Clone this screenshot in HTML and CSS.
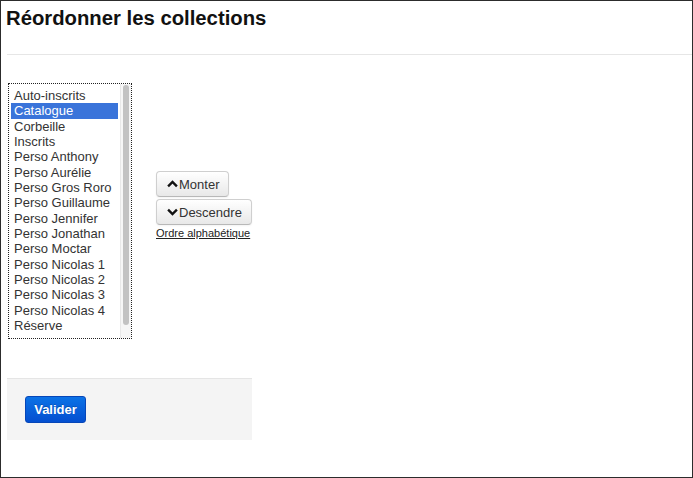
FILE: index.html
```html
<!DOCTYPE html>
<html lang="fr">
<head>
<meta charset="utf-8">
<title>Réordonner les collections</title>
<link rel="stylesheet" href="styles.css">
</head>
<body>
<div class="frame">
  <h1 class="title">Réordonner les collections</h1>
  <div class="rule"></div>
  <div class="editor">
    <div class="listbox">
      <ul class="options">
        <li>Auto-inscrits</li>
        <li class="selected">Catalogue</li>
        <li>Corbeille</li>
        <li>Inscrits</li>
        <li>Perso Anthony</li>
        <li>Perso Aurélie</li>
        <li>Perso Gros Roro</li>
        <li>Perso Guillaume</li>
        <li>Perso Jennifer</li>
        <li>Perso Jonathan</li>
        <li>Perso Moctar</li>
        <li>Perso Nicolas 1</li>
        <li>Perso Nicolas 2</li>
        <li>Perso Nicolas 3</li>
        <li>Perso Nicolas 4</li>
        <li>Réserve</li>
      </ul>
      <div class="scrollbar"><div class="thumb"></div></div>
    </div>
    <div class="controls">
      <button class="btn"><svg class="chev" viewBox="0 0 12 8" width="11" height="8"><path d="M1.2 6.6 6 1.8l4.8 4.8" fill="none" stroke="#111" stroke-width="2.6"/></svg>Monter</button>
      <button class="btn"><svg class="chev" viewBox="0 0 12 8" width="11" height="8"><path d="M1.2 1.4 6 6.2l4.8-4.8" fill="none" stroke="#111" stroke-width="2.6"/></svg>Descendre</button>
      <a class="alpha" href="#">Ordre alphabétique</a>
    </div>
  </div>
  <div class="actions">
    <button class="btn-primary">Valider</button>
  </div>
</div>
</body>
</html>
```
FILE: styles.css
```css
html, body { margin: 0; padding: 0; background: #fff; }
body { font-family: "Liberation Sans", Arial, Helvetica, sans-serif; color: #333; }
.frame {
  width: 693px; height: 478px; box-sizing: border-box;
  border: 1px solid #2c2c2c;
  padding: 0 0 0 6px;
  display: flex; flex-direction: column;
}
.title {
  margin: 5px 0 0 -1px;
  font-size: 20.3px; line-height: 24px; font-weight: bold; color: #111;
}
.rule { height: 1px; background: #e6e6e6; margin-top: 24px; }
.editor { display: flex; align-items: center; margin-top: 28px; margin-left: 1px; }
.listbox {
  width: 124px; height: 256px; box-sizing: border-box;
  border: 1px dotted #222;
  display: flex; position: relative;
}
.options {
  list-style: none; margin: 0 2px 0 0; padding: 4px 0 0 2px; flex: 1;
  font-size: 13px; line-height: 15.33px; color: #333;
}
.options li { padding-left: 3px; white-space: nowrap; }
.options li.selected { background: #3a74da; color: #fff; }
.scrollbar {
  width: 11px; background: #f6f6f6; border-left: 1px solid #e8e8e8;
  padding: 1px 2px 0 2px; box-sizing: border-box;
}
.thumb { height: 240px; background: #c2c2c2; border-radius: 4px; }
.controls { display: flex; flex-direction: column; align-items: flex-start; margin-left: 24px; margin-top: -11px; }
.btn {
  display: flex; align-items: center;
  font-family: "Liberation Sans", Arial, sans-serif; font-size: 13px; color: #333;
  height: 26px; padding: 0 9px 0 10px; margin: 0 0 2px 0;
  background: linear-gradient(#ffffff, #e8e8e8);
  border: 1px solid #cfcfcf; border-bottom-color: #b8b8b8; border-radius: 4px;
  box-shadow: inset 0 1px 0 rgba(255,255,255,.3), 0 1px 2px rgba(0,0,0,.05);
}
.chev { margin-right: 1px; }
.alpha { font-size: 11px; color: #222; text-decoration: underline; margin-top: 0; line-height: 13px; }
.actions {
  width: 245px; height: 62px; box-sizing: border-box; margin-top: 39px;
  background: #f4f4f4; border-top: 1px solid #e5e5e5;
  padding: 17px 0 0 18px;
}
.btn-primary {
  width: 61px; height: 27px; border-radius: 3px;
  border: 1px solid #0646b8;
  background: linear-gradient(#0b72e6, #044fd0);
  color: #fff; font-family: "Liberation Sans", Arial, sans-serif; font-size: 13px; font-weight: bold;
  padding: 0; text-shadow: 0 -1px 0 rgba(0,0,0,.2);
}
```
